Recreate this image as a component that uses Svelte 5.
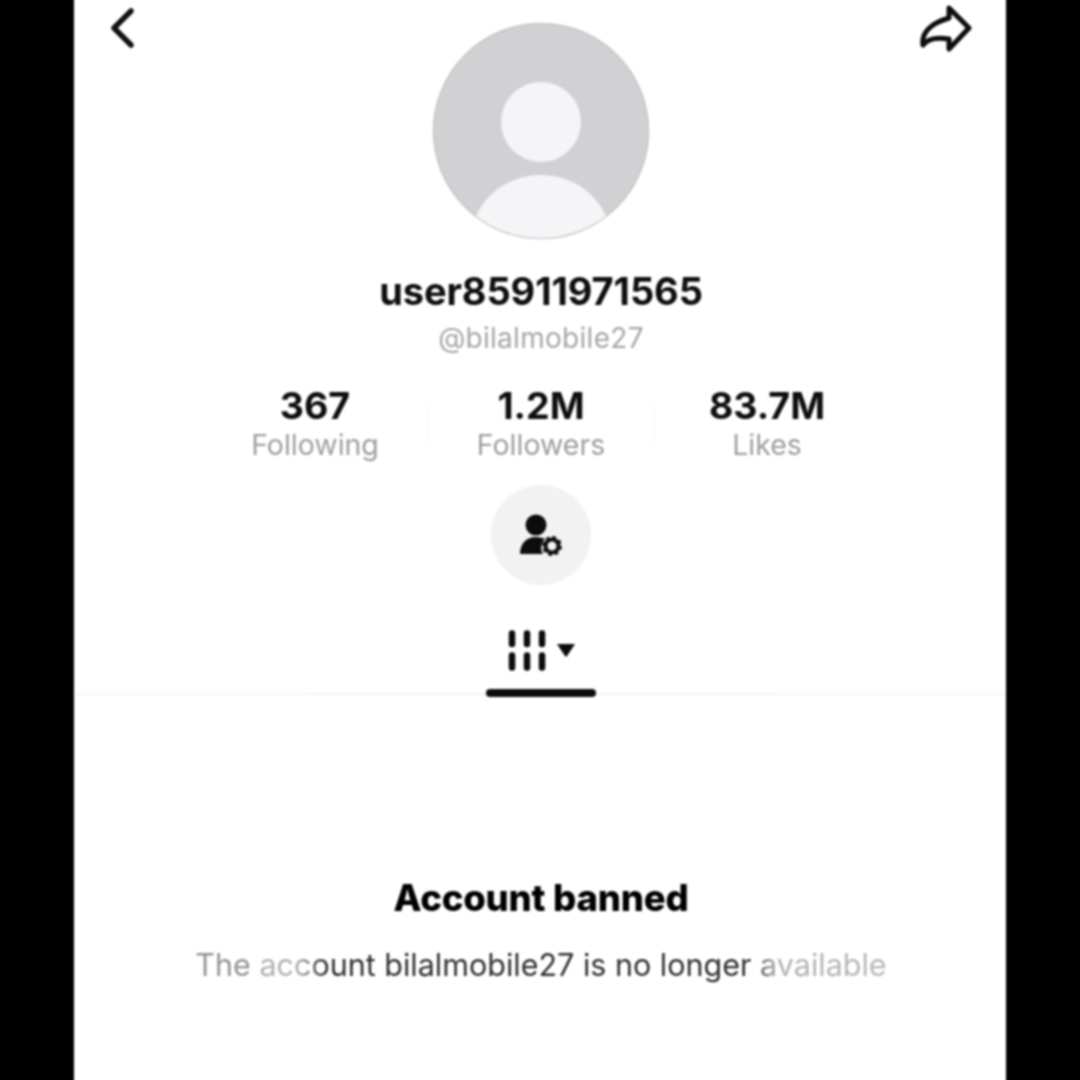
<script lang="ts">
  const stats = [
    { value: "367", label: "Following" },
    { value: "1.2M", label: "Followers" },
    { value: "83.7M", label: "Likes" },
  ];
</script>

<div class="page">
  <main class="screen">
    <header class="top">
      <button class="icon-btn back" aria-label="Back">
        <svg width="28" height="42" viewBox="0 0 28 42" fill="none" stroke="#111" stroke-width="5.500" stroke-linecap="round" stroke-linejoin="round"><path d="M23 5 6 22 23 39"/></svg>
      </button>
      <div class="avatar">
        <svg width="218" height="216" viewBox="0 0 218 216">
          <defs><clipPath id="clip"><circle cx="109" cy="108" r="107"/></clipPath></defs>
          <circle cx="109" cy="108" r="107.500" fill="#d1d1d4" stroke="#c6c6c8" stroke-width="1.500"/>
          <circle cx="109" cy="99" r="40" fill="#f5f5f7"/>
          <ellipse cx="109" cy="218" rx="70" ry="66" fill="#f5f5f7" clip-path="url(#clip)"/>
        </svg>
      </div>
      <button class="icon-btn share" aria-label="Share">
        <svg width="54" height="50" viewBox="0 0 54 50" fill="none" stroke="#0c0c0c" stroke-width="5" stroke-linejoin="round" stroke-linecap="round"><path d="M30 5 50 25 30 46V36C18 34 9 35 4 42 2 29 13 20 30 15Z"/></svg>
      </button>
    </header>

    <h1 class="name">user85911971565</h1>
    <p class="handle">@bilalmobile27</p>

    <section class="stats">
      {#each stats as s}
        <div class="stat">
          <strong>{s.value}</strong>
          <span>{s.label}</span>
        </div>
      {/each}
    </section>

    <button class="manage" aria-label="Manage account">
      <svg width="46" height="46" viewBox="0 0 46 46">
        <circle cx="18" cy="13" r="10.500" fill="#0c0c0c"/>
        <path d="M2 42c0-10 6-17 16-17 4 0 7 1 9 2-4 4-5 10-2 15Z" fill="#0c0c0c"/>
        <circle cx="34" cy="34" r="6.500" fill="none" stroke="#0c0c0c" stroke-width="4"/>
        <circle cx="34" cy="34" r="9" fill="none" stroke="#0c0c0c" stroke-width="1.800" stroke-dasharray="4 3.070"/>
      </svg>
    </button>

    <div class="tabs">
      <div class="tab">
        <svg width="68" height="43" viewBox="0 0 68 43">
          <g fill="none" stroke="#0c0c0c" stroke-width="6.500" stroke-linecap="round">
            <path d="M4 4.500V15M4 26.500V38.500M19 4.500V15M19 26.500V38.500M34 4.500V15M34 26.500V38.500"/>
          </g>
          <path d="M49 15H67L59 27Q58 28.500 57 27Z" fill="#0c0c0c"/>
        </svg>
      </div>
      <div class="tab-line"></div>
    </div>

    <section class="empty">
      <h2>Account banned</h2>
      <p>The account bilalmobile27 is no longer available</p>
    </section>
  </main>
</div>

<style>
  :global(body) {
    margin: 0;
    background: #000;
  }

  .page {
    display: flex;
    justify-content: center;
    height: 1080px;
    overflow: hidden;
    background: #000;
    font-family: Inter, "Liberation Sans", sans-serif;
  }

  /* runs past the page top and bottom so the blur doesn't darken those edges */
  .screen {
    flex-shrink: 0;
    width: 932px;
    height: 1100px;
    margin-top: -10px;
    box-sizing: border-box;
    padding: 10px 0 0 2px;
    display: flex;
    flex-direction: column;
    align-items: center;
    background: #fff;
    filter: blur(0.9px);
  }

  .top {
    width: 100%;
    display: grid;
    grid-template-columns: 1fr 218px 1fr;
    align-items: start;
    padding-top: 23px;
    box-sizing: border-box;
  }

  button {
    border: 0;
    padding: 0;
    background: none;
    display: flex;
  }

  .back {
    margin: -17px 0 0 32px;
    justify-self: start;
  }

  .share {
    margin: -20px 33px 0 0;
    justify-self: end;
  }

  .avatar {
    height: 216px;
  }

  .avatar svg {
    display: block;
  }

  .name {
    margin: 30px 0 0;
    font-size: 38px;
    line-height: 44px;
    font-weight: 700;
    letter-spacing: -0.1px;
    color: #0e0e10;
  }

  .handle {
    margin: 8px 0 0;
    font-size: 28px;
    line-height: 34px;
    color: #a6a6a8;
    letter-spacing: 0.3px;
  }

  .stats {
    display: grid;
    grid-template-columns: repeat(3, 226px);
    margin-top: 29px;
  }

  .stat {
    display: flex;
    flex-direction: column;
    align-items: center;
    position: relative;
  }

  .stat + .stat::before {
    content: "";
    position: absolute;
    left: 0;
    top: 22px;
    height: 36px;
    width: 1px;
    background: #f3f3f3;
  }

  .stat strong {
    font-size: 37.500px;
    line-height: 44px;
    font-weight: 700;
    color: #0e0e10;
  }

  .stat span {
    font-size: 28.500px;
    line-height: 34px;
    color: #9e9ea0;
  }

  .manage {
    width: 100px;
    height: 100px;
    margin-top: 23px;
    border-radius: 50%;
    background: #f2f2f3;
    align-items: center;
    justify-content: center;
  }

  .tabs {
    width: 100%;
    margin-top: 44px;
    display: flex;
    flex-direction: column;
    align-items: center;
    height: 64px;
    border-bottom: 2px solid;
    border-image: linear-gradient(90deg, #f6f6f6 25%, #f6eef2 26%, #f6eef2 74%, #f6f6f6 75%) 1;
  }

  .tab {
    flex-shrink: 0;
    height: 60px;
    width: 110px;
  }

  .tab svg {
    display: block;
    margin-left: 22px;
  }

  .tab-line {
    flex-shrink: 0;
    width: 110px;
    height: 8px;
    border-radius: 4px;
    background: #0c0c0c;
  }

  .empty {
    display: flex;
    flex-direction: column;
    align-items: center;
    margin-top: 181px;
  }

  .empty h2 {
    margin: 0;
    font-size: 36.500px;
    line-height: 44px;
    font-weight: 800;
    letter-spacing: -0.2px;
    color: #000;
  }

  .empty p {
    margin: 25px 0 0;
    font-size: 30.500px;
    line-height: 40px;
    background: linear-gradient(90deg, #929294 0%, #929294 8%, #b0b0b2 10%, #b0b0b2 15%, #2e2e30 19%, #2e2e30 80%, #b0b0b2 84%, #b8b8ba 100%);
    -webkit-background-clip: text;
    background-clip: text;
    color: transparent;
  }
</style>
